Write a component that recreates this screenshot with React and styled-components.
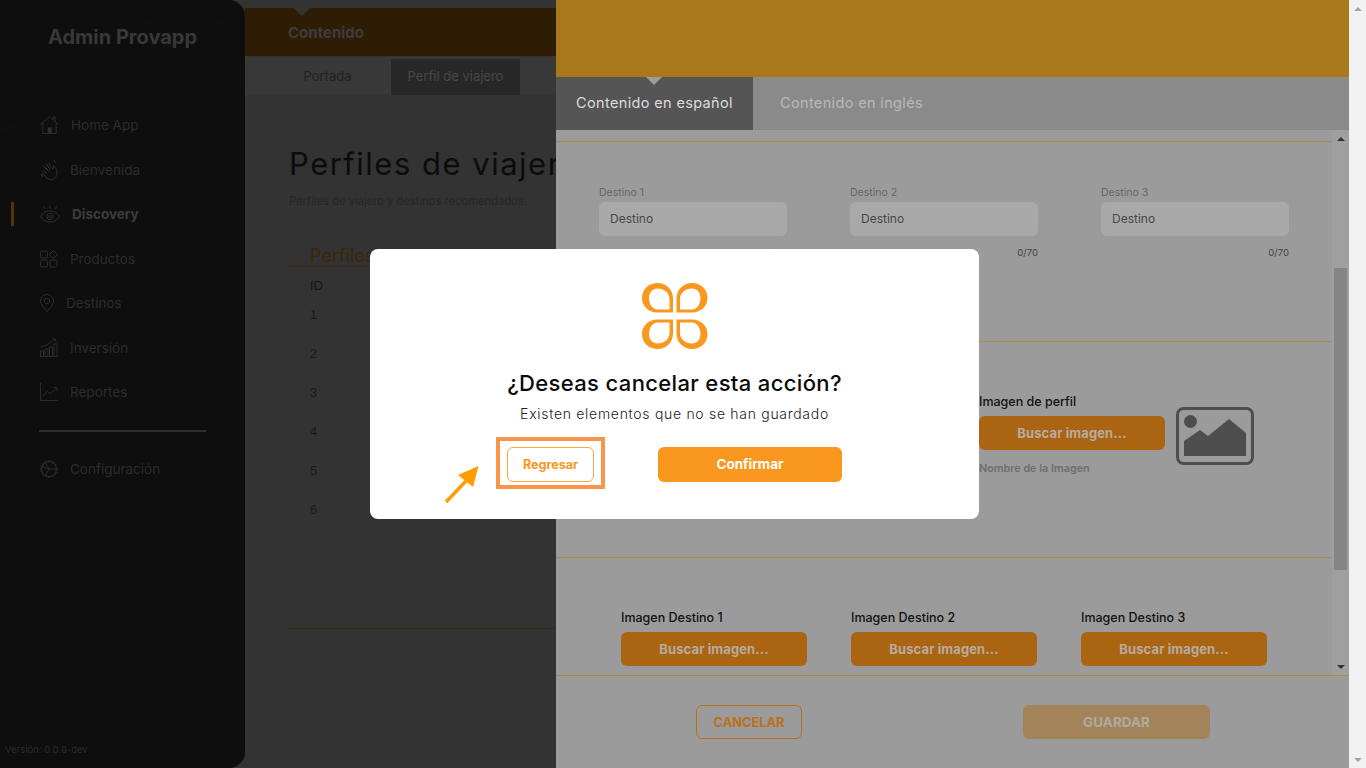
import React from "react";
import styled, { createGlobalStyle } from "styled-components";

const GlobalStyle = createGlobalStyle`
  html, body {
    margin: 0;
    height: 768px;
    overflow: hidden;
    background: #f1f1f1;
    font-family: "Inter", "Noto Sans", sans-serif;
  }
  * { box-sizing: border-box; }
`;

const HomeIcon = () => (
  <svg width="19" height="20" viewBox="0 0 20 20" fill="none" stroke="#2f2f2f" strokeWidth="1">
    <path d="M0.5 9.5 L10 1 L19.5 9.5 M3 8 V19 H17 V8 M14 4 V1.5 h2 V6" />
    <rect x="8" y="12.5" width="4.5" height="6.5" fill="#2f2f2f" stroke="none" />
  </svg>
);

const HandIcon = () => (
  <svg width="18" height="20" viewBox="0 0 18 20" fill="none" stroke="#2f2f2f" strokeWidth="1">
    <path d="M6 17 L1.5 11.5 M7 10 L3 5.5 M9 8 L6 3.5 M11 7 L8.5 3 M11.5 7.5 L13 9 L13.5 5.5 C15.5 7 17 10 17 13 C17 17 14 19.5 11 19.5 C8.5 19.5 7 18.5 6 17" />
    <path d="M3.5 10 L6.5 14 M5.5 7.5 L8.5 11.5 M8 6 L10.5 10" />
    <path d="M14 0.5 L15 2 M1 14 L3 16.5" strokeWidth="1.4" />
  </svg>
);

const EyeIcon = () => (
  <svg width="20" height="18" viewBox="0 0 20 18" fill="none" stroke="#2f2f2f" strokeWidth="1">
    <path d="M0.5 11.5 C3 7.5 6.5 6 10 6 C13.5 6 17 7.5 19.5 11.5 C17 15.5 13.5 17 10 17 C6.5 17 3 15.5 0.5 11.5 Z" />
    <circle cx="10" cy="11.5" r="3.2" />
    <circle cx="10" cy="11.5" r="1" />
    <path d="M10 0.5 V3.5 M3.5 1.5 L5 4 M16.5 1.5 L15 4" />
  </svg>
);

const ProductsIcon = () => (
  <svg width="18" height="18" viewBox="0 0 18 18" fill="none" stroke="#2f2f2f" strokeWidth="1">
    <rect x="0.5" y="1" width="7" height="7" rx="1.5" />
    <rect x="0.5" y="10" width="7" height="7" rx="1.5" />
    <rect x="10" y="10" width="7" height="7" rx="1.5" />
    <path d="M13.5 0.5 L17.5 4.5 L13.5 8.5 L9.5 4.5 Z" />
  </svg>
);

const PinIcon = () => (
  <svg width="14" height="18" viewBox="0 0 14 18" fill="none" stroke="#2f2f2f" strokeWidth="1">
    <path d="M7 17.5 C4 14 0.5 10.5 0.5 7 A6.5 6.5 0 0 1 13.5 7 C13.5 10.5 10 14 7 17.5 Z" />
    <circle cx="7" cy="7" r="2.6" />
  </svg>
);

const InvestIcon = () => (
  <svg width="18" height="19" viewBox="0 0 18 19" fill="none" stroke="#2f2f2f" strokeWidth="0.9">
    <rect x="0.5" y="13" width="3" height="5.5" />
    <rect x="5" y="11" width="3" height="7.5" />
    <rect x="9.5" y="9" width="3" height="9.5" />
    <rect x="14" y="6" width="3" height="12.5" />
    <path d="M0.5 9 C6 8 10 5 15 1 M12.5 1 H15.5 V3.5" />
  </svg>
);

const ReportIcon = () => (
  <svg width="18" height="18" viewBox="0 0 18 18" fill="none" stroke="#2f2f2f" strokeWidth="0.9">
    <path d="M0.5 0 V17.5 H18" />
    <path d="M3 13 L7.5 8.5 L10 11 L17 4.5 M13.5 4.5 H17 V8" />
  </svg>
);

const GearIcon = () => (
  <svg width="18" height="18" viewBox="0 0 18 18" fill="none" stroke="#2f2f2f">
    <circle cx="9" cy="9" r="7.4" strokeWidth="1" />
    <circle cx="9" cy="9" r="8.4" strokeWidth="1.1" strokeDasharray="1.2 1.4" />
    <path d="M5.5 2.5 L9 9 L5.5 15.5 M9 9 H16.4 M2 6 L9 9" strokeWidth="0.9" />
  </svg>
);

const petal =
  "M31 29.5 H15 C6.5 29.5 0 23 0 15 C0 6.5 6.5 0 15.5 0 C24.5 0 31 7 31 15.5 Z " +
  "M27.5 26.5 H15.5 C10.5 26.5 7 21 7 15 C7 9.5 10.5 5.5 15.5 5.5 C22 5.5 27.5 10 27.5 16 Z";

const BrandLogo = () => (
  <svg width="66" height="66" viewBox="0 0 66 66" fill="#f9971e">
    {["", "translate(65.5 0) scale(-1 1)", "translate(0 66) scale(1 -1)", "translate(65.5 66) scale(-1 -1)"].map((t) => (
      <path key={t} transform={t} fillRule="evenodd" d={petal} />
    ))}
  </svg>
);

const PictureIcon = () => (
  <svg width="78" height="58" viewBox="0 0 78 58">
    <rect x="1.5" y="1.5" width="75" height="55" rx="6" fill="none" stroke="#4e4e4e" strokeWidth="3" />
    <circle cx="14.5" cy="14.5" r="6.5" fill="#4e4e4e" />
    <path d="M8 49 V34 L24 23 L32 29 L53 12 L70 26 V49 Z" fill="#4e4e4e" />
  </svg>
);

const navItems = [
  { label: "Home App", Icon: HomeIcon },
  { label: "Bienvenida", Icon: HandIcon },
  { label: "Discovery", Icon: EyeIcon, active: true },
  { label: "Productos", Icon: ProductsIcon },
  { label: "Destinos", Icon: PinIcon },
  { label: "Inversión", Icon: InvestIcon },
  { label: "Reportes", Icon: ReportIcon },
];

const rows = [1, 2, 3, 4, 5, 6];
const destinos = [1, 2, 3];

const App = () => {
  return (
    <Page>
      <GlobalStyle />
      <Shell>
        <Sidebar>
          <SideWaves width="245" height="300" viewBox="0 0 245 300" fill="none" stroke="#111" strokeWidth="1.5">
            <path d="M0 130 C70 110 130 60 225 20 M0 180 C90 150 140 90 230 30 M175 100 C190 120 220 110 212 85 M0 120 C60 90 110 30 180 10" />
          </SideWaves>
          <Brand>Admin Provapp</Brand>
          <Nav>
            {navItems.map(({ label, Icon, active }) => (
              <NavItem key={label} $active={active}>
                <Icon />
                <span>{label}</span>
              </NavItem>
            ))}
          </Nav>
          <SideDivider />
          <NavItem>
            <GearIcon />
            <span>Configuración</span>
          </NavItem>
          <Version>Versión: 0.0.9-dev</Version>
        </Sidebar>

        <Main>
          <TopBand>
            <BandNotch />
            Contenido
          </TopBand>
          <SubNav>
            <SubTab>Portada</SubTab>
            <SubTab $active>Perfil de viajero</SubTab>
          </SubNav>
          <MainBody>
            <PageTitle>Perfiles de viajero</PageTitle>
            <PageSub>Perfiles de viajero y destinos recomendados.</PageSub>
            <TableBox>
              <TableTitle>Perfiles</TableTitle>
              <HeadCell>ID</HeadCell>
              {rows.map((n) => (
                <RowCell key={n}>{n}</RowCell>
              ))}
            </TableBox>
          </MainBody>
        </Main>

        <Drawer>
          <DrawerHeader />
          <DrawerTabs>
            <DrawerTab $active>
              <TabNotch />
              Contenido en español
            </DrawerTab>
            <DrawerTab>Contenido en inglés</DrawerTab>
          </DrawerTabs>
          <DrawerScroll>
            <DrawerContent>
              <FieldsSection>
                {destinos.map((n) => (
                  <div key={n}>
                    <FieldLabel>Destino {n}</FieldLabel>
                    <FieldInput>Destino</FieldInput>
                    <Counter>0/70</Counter>
                  </div>
                ))}
              </FieldsSection>
              <ProfileSection>
                <UploadColumn>
                  <UploadLabel>Imagen de perfil</UploadLabel>
                  <UploadButton>Buscar imagen...</UploadButton>
                  <FileName>Nombre de la Imagen</FileName>
                </UploadColumn>
                <PictureSlot>
                  <PictureIcon />
                </PictureSlot>
              </ProfileSection>
              <UploadsSection>
                {destinos.map((n) => (
                  <div key={n}>
                    <UploadLabel>Imagen Destino {n}</UploadLabel>
                    <UploadButton>Buscar imagen...</UploadButton>
                  </div>
                ))}
              </UploadsSection>
            </DrawerContent>
            <InnerTrack>
              <ArrowUp $color="#333" />
              <InnerThumb />
              <ArrowDown $color="#333" />
            </InnerTrack>
          </DrawerScroll>
          <DrawerFooter>
            <CancelButton>CANCELAR</CancelButton>
            <SaveButton>GUARDAR</SaveButton>
          </DrawerFooter>
        </Drawer>

        <Modal>
          <BrandLogo />
          <ModalTitle>¿Deseas cancelar esta acción?</ModalTitle>
          <ModalText>Existen elementos que no se han guardado</ModalText>
          <ModalActions>
            <BackButton>
              Regresar
              <Highlight />
              <PointerArrow width="40" height="42" viewBox="0 0 40 42">
                <path d="M4 40 L24 19" stroke="#ff9c00" strokeWidth="3.5" fill="none" />
                <path d="M36.5 4 L31 25 L16 13 Z" fill="#ff9c00" />
              </PointerArrow>
            </BackButton>
            <ConfirmButton>Confirmar</ConfirmButton>
          </ModalActions>
        </Modal>
      </Shell>
      <PageTrack>
        <ArrowUp $color="#a3a3a3" />
        <ArrowDown $color="#a3a3a3" />
      </PageTrack>
    </Page>
  );
};

const Page = styled.div`
  display: flex;
  width: 1366px;
  height: 768px;
`;

const Shell = styled.div`
  position: relative;
  display: flex;
  width: 1349px;
  height: 768px;
  background: #333;
  overflow: hidden;
`;

const PageTrack = styled.div`
  width: 17px;
  display: flex;
  flex-direction: column;
  justify-content: space-between;
  background: #f1f1f1;
`;

const ArrowUp = styled.div`
  width: 17px;
  height: 17px;
  display: flex;
  align-items: center;
  justify-content: center;
  &::before {
    content: "";
    border-left: 4px solid transparent;
    border-right: 4px solid transparent;
    border-bottom: 4px solid ${(p) => p.$color};
  }
`;

const ArrowDown = styled(ArrowUp)`
  &::before {
    border-bottom: none;
    border-top: 4px solid ${(p) => p.$color};
  }
`;

const Sidebar = styled.aside`
  position: relative;
  flex: 0 0 245px;
  padding-top: 26px;
  background: #0e0e0e;
  border-radius: 0 16px 16px 0;
`;

const SideWaves = styled.svg`
  position: absolute;
  top: 0;
  left: 0;
`;

const Brand = styled.div`
  position: relative;
  text-align: center;
  font-size: 20px;
  line-height: 23px;
  font-weight: 700;
  color: #383838;
`;

const Nav = styled.nav`
  position: relative;
  display: flex;
  flex-direction: column;
  gap: 24.5px;
  margin-top: 66px;
`;

const NavItem = styled.div`
  position: relative;
  display: flex;
  align-items: center;
  gap: 12px;
  height: 20px;
  padding-left: 40px;
  font-size: 13.5px;
  font-weight: ${(p) => (p.$active ? 700 : 400)};
  color: ${(p) => (p.$active ? "#3c3c3c" : "#2c2c2c")};
  &::before {
    content: "";
    display: ${(p) => (p.$active ? "block" : "none")};
    position: absolute;
    left: 11px;
    top: -2px;
    width: 3px;
    height: 24px;
    background: #5a3208;
  }
`;

const SideDivider = styled.div`
  height: 2px;
  margin: 28px 39px 27px;
  background: #2e2e2e;
`;

const Version = styled.div`
  position: absolute;
  left: 5px;
  bottom: 13px;
  font-size: 9.5px;
  color: #2a2a2a;
`;

const Main = styled.main`
  flex: 1;
  min-width: 0;
  padding-top: 8px;
`;

const TopBand = styled.div`
  position: relative;
  height: 49px;
  padding: 15px 0 0 43px;
  background: #2f1c05;
  border-bottom: 1px solid #3c3320;
  font-size: 15px;
  font-weight: 700;
  color: #3d3d3d;
`;

const BandNotch = styled.div`
  position: absolute;
  top: 0;
  left: 49px;
  border-left: 8px solid transparent;
  border-right: 8px solid transparent;
  border-top: 8px solid #333;
`;

const SubNav = styled.div`
  display: flex;
  height: 38px;
  padding: 2px 0 0 27px;
  background: #383838;
`;

const SubTab = styled.div`
  display: flex;
  align-items: center;
  justify-content: center;
  width: ${(p) => (p.$active ? "129px" : "119px")};
  padding: ${(p) => (p.$active ? "0 0 2px" : "0 8px 2px 0")};
  background: ${(p) => (p.$active ? "#272727" : "transparent")};
  font-size: 13px;
  color: ${(p) => (p.$active ? "#484848" : "#222")};
`;

const MainBody = styled.div`
  padding: 49px 0 0 44px;
`;

const PageTitle = styled.h1`
  margin: 0;
  font-size: 31px;
  line-height: 40px;
  font-weight: 400;
  letter-spacing: 1.5px;
  white-space: nowrap;
  color: #0c0c0c;
`;

const PageSub = styled.p`
  margin: 10px 0 0;
  font-size: 11.2px;
  line-height: 14px;
  color: #262626;
`;

const TableBox = styled.div`
  height: 386px;
  margin-top: 35px;
  border-bottom: 1px solid #3a2a10;
`;

const TableTitle = styled.div`
  height: 24px;
  padding-left: 21px;
  border-bottom: 1px solid #42290a;
  font-size: 18px;
  line-height: 26px;
  color: #3a2608;
`;

const HeadCell = styled.div`
  padding: 9px 0 0 21px;
  font-family: "Liberation Sans", sans-serif;
  font-size: 13px;
  line-height: 20px;
  color: #141414;
`;

const RowCell = styled.div`
  height: 39px;
  padding: 9px 0 0 21px;
  font-family: "Liberation Sans", sans-serif;
  font-size: 13px;
  line-height: 20px;
  color: #1a1a1a;
`;

const Drawer = styled.section`
  position: absolute;
  top: 0;
  left: 556px;
  right: 0;
  bottom: 0;
  display: flex;
  flex-direction: column;
  background: #9b9b9b;
`;

const DrawerHeader = styled.div`
  height: 77px;
  background: #a8781a;
`;

const DrawerTabs = styled.div`
  display: flex;
  height: 53px;
  background: #8a8a8a;
`;

const DrawerTab = styled.div`
  position: relative;
  display: flex;
  align-items: center;
  justify-content: center;
  width: 197px;
  padding-bottom: 2px;
  background: ${(p) => (p.$active ? "#555" : "transparent")};
  font-size: 14.5px;
  letter-spacing: 0.35px;
  color: ${(p) => (p.$active ? "#dcdcdc" : "#b9b9b9")};
`;

const TabNotch = styled.div`
  position: absolute;
  top: 0;
  left: 90px;
  border-left: 8px solid transparent;
  border-right: 8px solid transparent;
  border-top: 8px solid #9c9c9c;
`;

const DrawerScroll = styled.div`
  display: flex;
  height: 545px;
`;

const DrawerContent = styled.div`
  flex: 1;
  min-width: 0;
  padding-top: 11px;
  overflow: hidden;
`;

const FieldsSection = styled.div`
  display: grid;
  grid-template-columns: repeat(3, 188px);
  column-gap: 63px;
  height: 201px;
  padding: 43px 0 0 43px;
  border-top: 1px solid #ad8b45;
  border-bottom: 1px solid #ad8b45;
`;

const FieldLabel = styled.div`
  height: 17px;
  font-size: 10.5px;
  line-height: 16px;
  color: #666;
`;

const FieldInput = styled.div`
  height: 34px;
  padding-left: 11px;
  border-radius: 6px;
  background: #a9a9a9;
  font-size: 12px;
  line-height: 34px;
  color: #474747;
`;

const Counter = styled.div`
  margin-top: 11px;
  text-align: right;
  font-size: 9.5px;
  line-height: 12px;
  color: #444;
`;

const ProfileSection = styled.div`
  display: flex;
  gap: 11px;
  height: 216px;
  padding: 52px 0 0 423px;
  border-bottom: 1px solid #ad8b45;
`;

const UploadColumn = styled.div`
  width: 186px;
`;

const UploadLabel = styled.div`
  height: 22px;
  font-size: 12.5px;
  line-height: 16px;
  font-weight: 500;
  white-space: nowrap;
  color: #111;
`;

const UploadButton = styled.div`
  height: 34px;
  border-radius: 6px;
  background: #aa6412;
  text-align: center;
  font-size: 13px;
  line-height: 34px;
  font-weight: 700;
  letter-spacing: 0.1px;
  color: #b5aca0;
`;

const FileName = styled.div`
  margin-top: 12px;
  font-size: 10.8px;
  line-height: 14px;
  font-weight: 600;
  color: #6e6e6e;
`;

const PictureSlot = styled.div`
  padding-top: 13px;
`;

const UploadsSection = styled.div`
  display: grid;
  grid-template-columns: repeat(3, 186px);
  column-gap: 44px;
  padding: 52px 0 0 65px;
`;

const InnerTrack = styled.div`
  display: flex;
  flex-direction: column;
  align-items: center;
  width: 17px;
  background: #9f9f9f;
`;

const InnerThumb = styled.div`
  width: 13px;
  height: 302px;
  margin: 121px 0 auto;
  background: #858585;
`;

const DrawerFooter = styled.div`
  flex: 1;
  padding: 29px 0 0 140px;
  display: flex;
  gap: 221px;
  border-top: 1px solid #ad8b45;
`;

const CancelButton = styled.div`
  width: 106px;
  height: 34px;
  border: 1px solid #b9701a;
  border-radius: 6px;
  text-align: center;
  font-size: 12.8px;
  line-height: 34px;
  font-weight: 700;
  color: #b9701a;
`;

const SaveButton = styled.div`
  width: 187px;
  height: 34px;
  border-radius: 6px;
  background: #a3835a;
  text-align: center;
  font-size: 13.5px;
  line-height: 34px;
  font-weight: 700;
  color: #b0aaa0;
`;

const Modal = styled.div`
  position: absolute;
  top: 249px;
  left: 370px;
  width: 609px;
  height: 270px;
  padding-top: 34px;
  display: flex;
  flex-direction: column;
  align-items: center;
  border-radius: 8px;
  background: #fff;
`;

const ModalTitle = styled.h2`
  margin: 20px 0 0;
  font-size: 22px;
  line-height: 28px;
  font-weight: 500;
  letter-spacing: 0.35px;
  color: #0a0a0a;
`;

const ModalText = styled.p`
  margin: 8px 0 0;
  font-size: 14px;
  line-height: 18px;
  font-weight: 300;
  letter-spacing: 0.7px;
  color: #222;
`;

const ModalActions = styled.div`
  display: flex;
  gap: 64px;
  align-self: flex-start;
  margin: 24px 0 0 137px;
`;

const BackButton = styled.div`
  position: relative;
  width: 87px;
  height: 35px;
  border: 1px solid #f9a63f;
  border-radius: 6px;
  text-align: center;
  font-size: 12.5px;
  line-height: 33px;
  font-weight: 700;
  color: #f9971e;
`;

const Highlight = styled.div`
  position: absolute;
  top: -11px;
  left: -12px;
  right: -12px;
  bottom: -8px;
  border: 4px solid #f9954a;
`;

const PointerArrow = styled.svg`
  position: absolute;
  left: -66px;
  top: 14px;
`;

const ConfirmButton = styled.div`
  width: 184px;
  height: 35px;
  border-radius: 6px;
  background: #f9971e;
  text-align: center;
  font-size: 13.5px;
  line-height: 35px;
  font-weight: 700;
  color: #fff;
`;

export default App;
